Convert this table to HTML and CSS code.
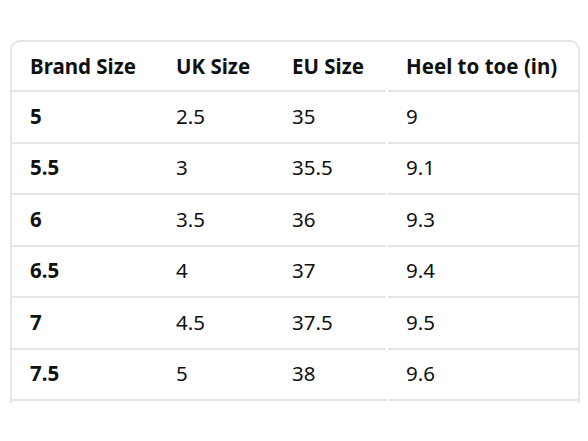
FILE: index.html
```html
<!DOCTYPE html>
<html>
<head>
<meta charset="utf-8">
<link rel="stylesheet" href="styles.css">
</head>
<body>
<div class="page">
  <div class="table">
    <div class="row head">
      <div class="cell c1">Brand Size</div>
      <div class="cell c2">UK Size</div>
      <div class="cell c3">EU Size</div>
      <div class="cell c4">Heel to toe (in)</div>
    </div>
    <div class="row">
      <div class="cell c1 b">5</div>
      <div class="cell c2">2.5</div>
      <div class="cell c3">35</div>
      <div class="cell c4">9</div>
    </div>
    <div class="row">
      <div class="cell c1 b">5.5</div>
      <div class="cell c2">3</div>
      <div class="cell c3">35.5</div>
      <div class="cell c4">9.1</div>
    </div>
    <div class="row">
      <div class="cell c1 b">6</div>
      <div class="cell c2">3.5</div>
      <div class="cell c3">36</div>
      <div class="cell c4">9.3</div>
    </div>
    <div class="row">
      <div class="cell c1 b">6.5</div>
      <div class="cell c2">4</div>
      <div class="cell c3">37</div>
      <div class="cell c4">9.4</div>
    </div>
    <div class="row">
      <div class="cell c1 b">7</div>
      <div class="cell c2">4.5</div>
      <div class="cell c3">37.5</div>
      <div class="cell c4">9.5</div>
    </div>
    <div class="row">
      <div class="cell c1 b">7.5</div>
      <div class="cell c2">5</div>
      <div class="cell c3">38</div>
      <div class="cell c4">9.6</div>
    </div>
  </div>
</div>
</body>
</html>
```

FILE: styles.css
```css
html, body {
  margin: 0;
  padding: 0;
  background: #ffffff;
}
.page {
  padding: 40px 0 0 10px;
  width: 570px;
}
.table {
  border: 2px solid #e3e5e6;
  border-bottom: 0;
  border-radius: 10px 10px 0 0;
  padding-bottom: 2px;
  font-family: "Noto Sans", "Open Sans", sans-serif;
  font-size: 20.5px;
  color: #0f1111;
}
.row {
  display: flex;
  height: 51.5px;
}
.row.head {
  height: 50px;
  font-weight: 700;
}
.cell {
  display: flex;
  align-items: center;
  padding-left: 18px;
  padding-bottom: 2px;
  box-sizing: border-box;
  border-bottom: 2px solid #e3e5e6;
  height: 100%;
}
.head .cell { padding-bottom: 1px; }
.c1 { width: 146px; }
.c2 { width: 116px; }
.c3 { width: 112px; }
.c4 { flex: 1; margin-left: 2px; }
.b { font-weight: 700; }
```
